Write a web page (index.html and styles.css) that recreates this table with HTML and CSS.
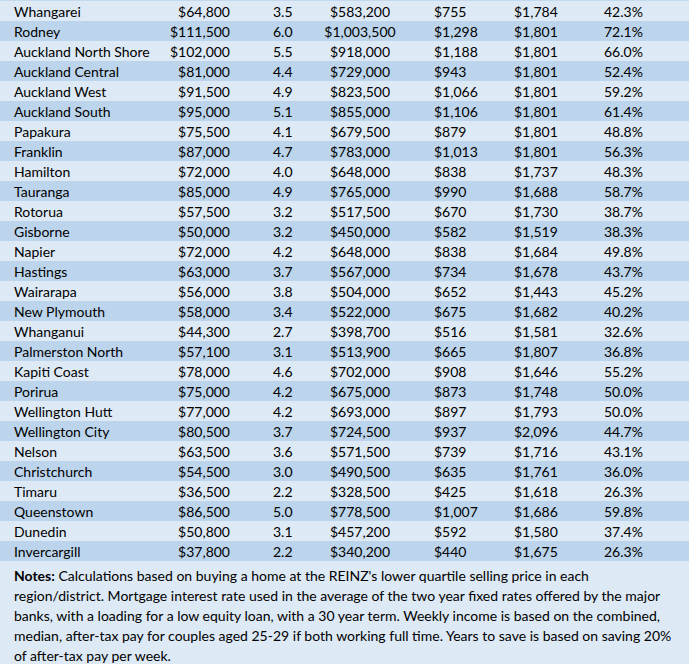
FILE: index.html
```html
<!DOCTYPE html>
<html>
<head>
<meta charset="utf-8">
<link rel="stylesheet" href="styles.css">
</head>
<body>
<div class="sheet">
  <div class="table">
    <div class="row"><span class="name">Whangarei</span><span class="c2">$64,800</span><span class="c3">3.5</span><span class="c4">$583,200</span><span class="c5">$755</span><span class="c6">$1,784</span><span class="c7">42.3%</span></div>
    <div class="row"><span class="name">Rodney</span><span class="c2">$111,500</span><span class="c3">6.0</span><span class="c4">$1,003,500</span><span class="c5">$1,298</span><span class="c6">$1,801</span><span class="c7">72.1%</span></div>
    <div class="row"><span class="name">Auckland North Shore</span><span class="c2">$102,000</span><span class="c3">5.5</span><span class="c4">$918,000</span><span class="c5">$1,188</span><span class="c6">$1,801</span><span class="c7">66.0%</span></div>
    <div class="row"><span class="name">Auckland Central</span><span class="c2">$81,000</span><span class="c3">4.4</span><span class="c4">$729,000</span><span class="c5">$943</span><span class="c6">$1,801</span><span class="c7">52.4%</span></div>
    <div class="row"><span class="name">Auckland West</span><span class="c2">$91,500</span><span class="c3">4.9</span><span class="c4">$823,500</span><span class="c5">$1,066</span><span class="c6">$1,801</span><span class="c7">59.2%</span></div>
    <div class="row"><span class="name">Auckland South</span><span class="c2">$95,000</span><span class="c3">5.1</span><span class="c4">$855,000</span><span class="c5">$1,106</span><span class="c6">$1,801</span><span class="c7">61.4%</span></div>
    <div class="row"><span class="name">Papakura</span><span class="c2">$75,500</span><span class="c3">4.1</span><span class="c4">$679,500</span><span class="c5">$879</span><span class="c6">$1,801</span><span class="c7">48.8%</span></div>
    <div class="row"><span class="name">Franklin</span><span class="c2">$87,000</span><span class="c3">4.7</span><span class="c4">$783,000</span><span class="c5">$1,013</span><span class="c6">$1,801</span><span class="c7">56.3%</span></div>
    <div class="row"><span class="name">Hamilton</span><span class="c2">$72,000</span><span class="c3">4.0</span><span class="c4">$648,000</span><span class="c5">$838</span><span class="c6">$1,737</span><span class="c7">48.3%</span></div>
    <div class="row"><span class="name">Tauranga</span><span class="c2">$85,000</span><span class="c3">4.9</span><span class="c4">$765,000</span><span class="c5">$990</span><span class="c6">$1,688</span><span class="c7">58.7%</span></div>
    <div class="row"><span class="name">Rotorua</span><span class="c2">$57,500</span><span class="c3">3.2</span><span class="c4">$517,500</span><span class="c5">$670</span><span class="c6">$1,730</span><span class="c7">38.7%</span></div>
    <div class="row"><span class="name">Gisborne</span><span class="c2">$50,000</span><span class="c3">3.2</span><span class="c4">$450,000</span><span class="c5">$582</span><span class="c6">$1,519</span><span class="c7">38.3%</span></div>
    <div class="row"><span class="name">Napier</span><span class="c2">$72,000</span><span class="c3">4.2</span><span class="c4">$648,000</span><span class="c5">$838</span><span class="c6">$1,684</span><span class="c7">49.8%</span></div>
    <div class="row"><span class="name">Hastings</span><span class="c2">$63,000</span><span class="c3">3.7</span><span class="c4">$567,000</span><span class="c5">$734</span><span class="c6">$1,678</span><span class="c7">43.7%</span></div>
    <div class="row"><span class="name">Wairarapa</span><span class="c2">$56,000</span><span class="c3">3.8</span><span class="c4">$504,000</span><span class="c5">$652</span><span class="c6">$1,443</span><span class="c7">45.2%</span></div>
    <div class="row"><span class="name">New Plymouth</span><span class="c2">$58,000</span><span class="c3">3.4</span><span class="c4">$522,000</span><span class="c5">$675</span><span class="c6">$1,682</span><span class="c7">40.2%</span></div>
    <div class="row"><span class="name">Whanganui</span><span class="c2">$44,300</span><span class="c3">2.7</span><span class="c4">$398,700</span><span class="c5">$516</span><span class="c6">$1,581</span><span class="c7">32.6%</span></div>
    <div class="row"><span class="name">Palmerston North</span><span class="c2">$57,100</span><span class="c3">3.1</span><span class="c4">$513,900</span><span class="c5">$665</span><span class="c6">$1,807</span><span class="c7">36.8%</span></div>
    <div class="row"><span class="name">Kapiti Coast</span><span class="c2">$78,000</span><span class="c3">4.6</span><span class="c4">$702,000</span><span class="c5">$908</span><span class="c6">$1,646</span><span class="c7">55.2%</span></div>
    <div class="row"><span class="name">Porirua</span><span class="c2">$75,000</span><span class="c3">4.2</span><span class="c4">$675,000</span><span class="c5">$873</span><span class="c6">$1,748</span><span class="c7">50.0%</span></div>
    <div class="row"><span class="name">Wellington Hutt</span><span class="c2">$77,000</span><span class="c3">4.2</span><span class="c4">$693,000</span><span class="c5">$897</span><span class="c6">$1,793</span><span class="c7">50.0%</span></div>
    <div class="row"><span class="name">Wellington City</span><span class="c2">$80,500</span><span class="c3">3.7</span><span class="c4">$724,500</span><span class="c5">$937</span><span class="c6">$2,096</span><span class="c7">44.7%</span></div>
    <div class="row"><span class="name">Nelson</span><span class="c2">$63,500</span><span class="c3">3.6</span><span class="c4">$571,500</span><span class="c5">$739</span><span class="c6">$1,716</span><span class="c7">43.1%</span></div>
    <div class="row"><span class="name">Christchurch</span><span class="c2">$54,500</span><span class="c3">3.0</span><span class="c4">$490,500</span><span class="c5">$635</span><span class="c6">$1,761</span><span class="c7">36.0%</span></div>
    <div class="row"><span class="name">Timaru</span><span class="c2">$36,500</span><span class="c3">2.2</span><span class="c4">$328,500</span><span class="c5">$425</span><span class="c6">$1,618</span><span class="c7">26.3%</span></div>
    <div class="row"><span class="name">Queenstown</span><span class="c2">$86,500</span><span class="c3">5.0</span><span class="c4">$778,500</span><span class="c5">$1,007</span><span class="c6">$1,686</span><span class="c7">59.8%</span></div>
    <div class="row"><span class="name">Dunedin</span><span class="c2">$50,800</span><span class="c3">3.1</span><span class="c4">$457,200</span><span class="c5">$592</span><span class="c6">$1,580</span><span class="c7">37.4%</span></div>
    <div class="row"><span class="name">Invercargill</span><span class="c2">$37,800</span><span class="c3">2.2</span><span class="c4">$340,200</span><span class="c5">$440</span><span class="c6">$1,675</span><span class="c7">26.3%</span></div>
  </div>
  <p class="notes"><b>Notes:</b> Calculations based on buying a home at the REINZ's lower quartile selling price in each<br>region/district. Mortgage interest rate used in the average of the two year fixed rates offered by the major<br>banks, with a loading for a low equity loan, with a 30 year term. Weekly income is based on the combined,<br>median, after-tax pay for couples aged 25-29 if both working full time. Years to save is based on saving 20%<br>of after-tax pay per week.</p>
</div>
</body>
</html>
```
FILE: styles.css
```css
html, body {
  margin: 0;
  padding: 0;
  background: #dde9f5;
}
.sheet {
  width: 689px;
  height: 664px;
  background: #dde9f5;
  font-family: Lato, "Open Sans", sans-serif;
  font-size: 14px;
  color: #000;
  border-top: 1px solid #c3d9ee;
  box-sizing: border-box;
}
.table {
  display: flex;
  flex-direction: column;
}
.row {
  display: grid;
  grid-template-columns: 160px 70px 70px 120px 80px 90px 99px;
  height: 20px;
  line-height: 21px;
  white-space: nowrap;
}
.row:nth-child(odd) { background: #dde9f5; }
.row:nth-child(even) { background: #bcd5ec; }
.name { padding-left: 14px; }
.c2 { text-align: right; }
.c3 { padding-left: 43px; }
.c4 { text-align: center; }
.c5 { padding-left: 14px; }
.c6 { padding-left: 14px; }
.c7 { padding-left: 14px; }
.notes {
  margin: 0;
  padding: 5px 0 0 14px;
  line-height: 20px;
  white-space: nowrap;
}
.notes b { font-weight: 700; }
```
